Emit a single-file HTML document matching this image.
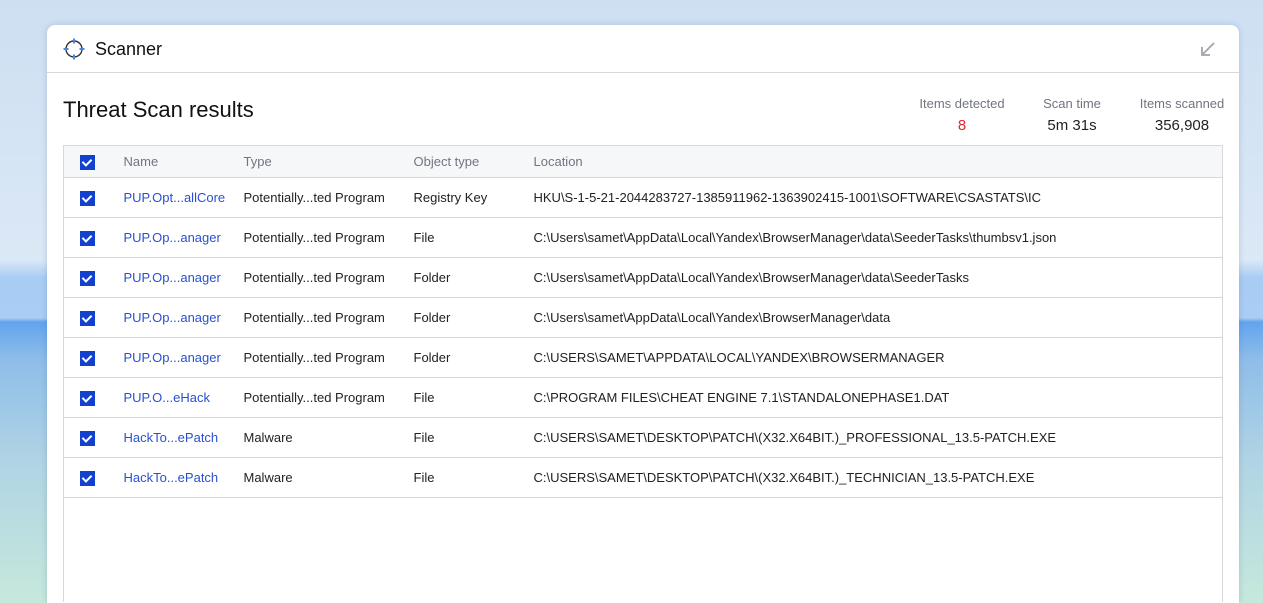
<!DOCTYPE html>
<html style="height:603px;overflow:hidden"><head><meta charset="utf-8"><style>
*{margin:0;padding:0;box-sizing:border-box}
body{width:1263px;height:603px;overflow:hidden;position:relative;font-family:"Liberation Sans",sans-serif;
background:linear-gradient(180deg,#cddff2 0,#dbe8f6 260px,#a8ccf4 278px,#a9cdf3 318px,#62a4ef 322px,#8fbde9 360px,#b0d4e4 460px,#c6e8dc 603px)}
.card{position:absolute;left:47px;top:25px;width:1192px;height:578px;overflow:hidden;background:#fff;border-radius:8px 8px 0 0;box-shadow:0 0 6px rgba(60,90,130,.25)}
.hdr{height:48px;border-bottom:1px solid #d6d8de;position:relative}
.hdr .t{position:absolute;left:48px;top:14px;font-size:18px;color:#111}
h1{position:absolute;left:16px;top:72px;font-size:22px;font-weight:normal;color:#111}
.st{position:absolute;top:71px;text-align:center;font-size:13px;color:#707580}
.st b{display:block;font-weight:normal;font-size:15px;color:#222;margin-top:6px}
table{position:absolute;left:16px;top:120px;width:1160px;border-collapse:collapse;border:1px solid #d6d8de;border-bottom:0;font-size:13px;color:#222}
th{background:#f6f7f9;height:32px;text-align:left;font-weight:normal;color:#707580;border-bottom:1px solid #d6d8de}
td{height:40px;border-bottom:1px solid #d6d8de;white-space:nowrap}
td.n{color:#2a50d2}
.cb{display:inline-block;width:15px;height:15px;background:#1241cf;margin-left:16px;position:relative;vertical-align:middle}
.cb:after{content:"";position:absolute;left:4px;top:2px;width:4px;height:7px;border:solid #fff;border-width:0 2px 2px 0;transform:rotate(45deg)}
.fill{height:104px;border:0}
</style></head><body>
<div class="card">
<div class="hdr">
<svg style="position:absolute;left:15px;top:12px" width="24" height="24" viewBox="0 0 24 24"><circle cx="12" cy="12" r="8" fill="none" stroke="#333" stroke-width="1.4"/><path d="M12 1.5v5M12 17.5v5M1.5 12h5M17.5 12h5" stroke="#4a86e8" stroke-width="2"/></svg>
<div class="t">Scanner</div>
<svg style="position:absolute;left:1153px;top:16px" width="16" height="16" viewBox="0 0 16 16"><path d="M14 2L3 13M2 6v8h8" fill="none" stroke="#a0a4ab" stroke-width="1.8"/></svg>
</div>
<h1>Threat Scan results</h1>
<div class="st" style="left:870px;width:90px">Items detected<b style="color:#e0262c">8</b></div>
<div class="st" style="left:990px;width:70px">Scan time<b>5m 31s</b></div>
<div class="st" style="left:1090px;width:90px">Items scanned<b>356,908</b></div>
<table>
<tr><th style="width:60px"><span class="cb"></span></th><th style="width:120px">Name</th><th style="width:170px">Type</th><th style="width:120px">Object type</th><th>Location</th></tr>
<tr><td><span class="cb"></span></td><td class="n">PUP.Opt...allCore</td><td>Potentially...ted Program</td><td>Registry Key</td><td>HKU\S-1-5-21-2044283727-1385911962-1363902415-1001\SOFTWARE\CSASTATS\IC</td></tr>
<tr><td><span class="cb"></span></td><td class="n">PUP.Op...anager</td><td>Potentially...ted Program</td><td>File</td><td>C:\Users\samet\AppData\Local\Yandex\BrowserManager\data\SeederTasks\thumbsv1.json</td></tr>
<tr><td><span class="cb"></span></td><td class="n">PUP.Op...anager</td><td>Potentially...ted Program</td><td>Folder</td><td>C:\Users\samet\AppData\Local\Yandex\BrowserManager\data\SeederTasks</td></tr>
<tr><td><span class="cb"></span></td><td class="n">PUP.Op...anager</td><td>Potentially...ted Program</td><td>Folder</td><td>C:\Users\samet\AppData\Local\Yandex\BrowserManager\data</td></tr>
<tr><td><span class="cb"></span></td><td class="n">PUP.Op...anager</td><td>Potentially...ted Program</td><td>Folder</td><td>C:\USERS\SAMET\APPDATA\LOCAL\YANDEX\BROWSERMANAGER</td></tr>
<tr><td><span class="cb"></span></td><td class="n">PUP.O...eHack</td><td>Potentially...ted Program</td><td>File</td><td>C:\PROGRAM FILES\CHEAT ENGINE 7.1\STANDALONEPHASE1.DAT</td></tr>
<tr><td><span class="cb"></span></td><td class="n">HackTo...ePatch</td><td>Malware</td><td>File</td><td>C:\USERS\SAMET\DESKTOP\PATCH\(X32.X64BIT.)_PROFESSIONAL_13.5-PATCH.EXE</td></tr>
<tr><td><span class="cb"></span></td><td class="n">HackTo...ePatch</td><td>Malware</td><td>File</td><td>C:\USERS\SAMET\DESKTOP\PATCH\(X32.X64BIT.)_TECHNICIAN_13.5-PATCH.EXE</td></tr>
<tr><td class="fill" colspan="5"></td></tr>
</table>
</div>
</body></html>
